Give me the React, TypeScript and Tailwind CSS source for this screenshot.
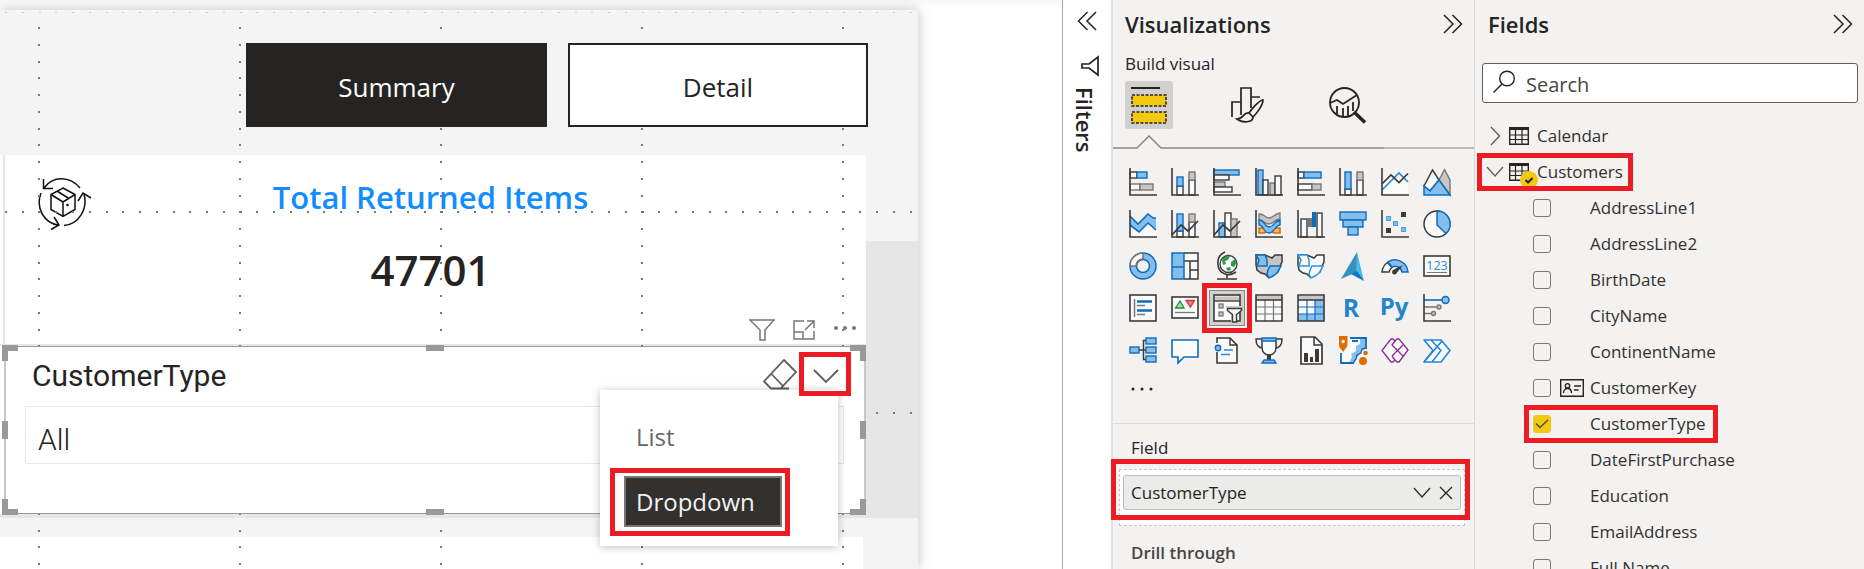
import type { ReactNode } from "react";

const DARK = "#3b3a39";
const BLUE = "#0f6cbd";
const SKY = "#83beec";
const GREY = "#c8c6c4";
const MID = "#797775";
const PALE = "#fafafa";

const Axis = () => <path d="M1 0V27H28" fill="none" stroke={DARK} strokeWidth="1.6" />;

type BoxProps = { x: number; y: number; w: number; h: number; kind: "blue" | "grey" | "white" | "pale" };
const fills = { blue: SKY, grey: GREY, white: PALE, pale: PALE };
const strokes = { blue: BLUE, grey: MID, white: DARK, pale: MID };
const Box = ({ x, y, w, h, kind }: BoxProps) => (
  <rect x={x} y={y} width={w} height={h} fill={fills[kind]} stroke={strokes[kind]} strokeWidth="1.4" />
);

const LAND = "M1 3h9l7 3 3-3h7v7l-2 4-2 6-4 2-2 2-4 1-3-3-4-1-4-3-1-5z";
const WEST = "M1 3h9l2 5v6H2l2-6z";
const EAST = "M15 14h11l-4 7-4 3-4 2-2-4 1-4z";

const visuals: { name: string; art: ReactNode }[] = [
  { name: "Stacked bar chart", art: <><Box x={1} y={4} w={7} h={6} kind="white" /><Box x={8} y={4} w={10} h={6} kind="blue" /><Box x={1} y={16} w={10} h={6} kind="pale" /><Box x={11} y={16} w={13} h={6} kind="grey" /><Axis /></> },
  { name: "Stacked column chart", art: <><Box x={6} y={18} w={6} h={9} kind="white" /><Box x={6} y={9} w={6} h={9} kind="blue" /><Box x={18} y={12} w={6} h={15} kind="white" /><Box x={18} y={4} w={6} h={8} kind="grey" /><Axis /></> },
  { name: "Clustered bar chart", art: <><Box x={1} y={2} w={25} h={5} kind="blue" /><Box x={1} y={7} w={15} h={5} kind="white" /><Box x={1} y={14} w={11} h={5} kind="grey" /><Box x={1} y={19} w={18} h={5} kind="white" /><Axis /></> },
  { name: "Clustered column chart", art: <><Box x={3} y={2} w={5} h={25} kind="blue" /><Box x={8} y={12} w={5} h={15} kind="white" /><Box x={15} y={15} w={5} h={12} kind="grey" /><Box x={20} y={8} w={6} h={19} kind="white" /><Axis /></> },
  { name: "100% stacked bar chart", art: <><Box x={1} y={4} w={6} h={6} kind="white" /><Box x={7} y={4} w={17} h={6} kind="blue" /><Box x={1} y={16} w={14} h={6} kind="white" /><Box x={15} y={16} w={9} h={6} kind="grey" /><Axis /></> },
  { name: "100% stacked column chart", art: <><Box x={6} y={21} w={6} h={6} kind="white" /><Box x={6} y={4} w={6} h={17} kind="blue" /><Box x={18} y={12} w={6} h={15} kind="white" /><Box x={18} y={4} w={6} h={8} kind="grey" /><Axis /></> },
  { name: "Line chart", art: <><path d="M1 16 10 7l8 7 9-9v22H1z" fill={PALE} /><path d="M1 22 18 5l9 9" fill="none" stroke="#2b88d8" strokeWidth="1.7" /><path d="m1 16 9-9 8 7.500 9-9" fill="none" stroke={DARK} strokeWidth="1.7" /><Axis /></> },
  { name: "Area chart", art: <><path d="m16 12 5.500-10.500L27 12v15z" fill={GREY} stroke={MID} strokeWidth="1.4" /><path d="M1 18 9.500 2 16 12 7 23z" fill={PALE} stroke={DARK} strokeWidth="1.5" /><path d="m1 18 6 5 9-11 11 15H1z" fill={SKY} stroke={BLUE} strokeWidth="1.5" /></> },
  { name: "Stacked area chart", art: <><path d="m1 15 9 7 9-9 8 7v7H1z" fill={PALE} /><path d="m1 6 8 8L19 4l5 4h3v12l-8-7-9 9-9-7z" fill={SKY} /><path d="m1 6 8 8L19 4l5 4h3M1 15l9 7 9-9 8 7" fill="none" stroke={BLUE} strokeWidth="1.6" /><Axis /></> },
  { name: "Line and stacked column chart", art: <><Box x={6} y={21} w={6} h={6} kind="white" /><Box x={6} y={4} w={6} h={17} kind="blue" /><Box x={18} y={12} w={6} h={15} kind="white" /><Box x={18} y={4} w={6} h={8} kind="grey" /><path d="m1 25 9-10 7 6 10-10" fill="none" stroke={DARK} strokeWidth="1.7" /><Axis /></> },
  { name: "Line and clustered column chart", art: <><Box x={6} y={13} w={6} h={14} kind="blue" /><Box x={12} y={3} w={6} h={24} kind="white" /><Box x={18} y={9} w={6} h={18} kind="grey" /><path d="m1 25 9-10 7 6 10-10" fill="none" stroke={DARK} strokeWidth="1.7" /><Axis /></> },
  { name: "Ribbon chart", art: <><path d="M4 18h5l5 2 5-2h6v5h-6l-5-2-5 2H4z" fill="#ffb366" stroke="#d96b00" strokeWidth="1.6" /><path d="M4 4c6 0 6 4 10 4s5-4 11-5v6c-6 0-6 5-11 5S9 10 4 10z" fill={GREY} stroke={MID} strokeWidth="1.3" /><path d="M4 10c6 0 5 7 10 7s5-6 11-7v5c-5 0-5 8-11 8S9 15 4 15z" fill={SKY} stroke={BLUE} strokeWidth="1.4" /><Axis /></> },
  { name: "Waterfall chart", art: <><Box x={4} y={9} w={6} h={18} kind="white" /><rect x="11" y="8" width="4" height="9" fill={MID} /><rect x="15" y="2" width="4" height="15" fill={BLUE} /><Box x={20} y={3} w={5} h={24} kind="white" /><Axis /></> },
  { name: "Funnel chart", art: <><Box x={1} y={2} w={26} h={8} kind="blue" /><Box x={4} y={10} w={20} h={7} kind="blue" /><Box x={9} y={17} w={10} h={8} kind="blue" /></> },
  { name: "Scatter chart", art: <><rect x="20" y="2" width="5" height="5" fill={DARK} /><rect x="5" y="18" width="5" height="5" fill={DARK} /><g fill={SKY} stroke="#4a9fe0"><rect x="5.500" y="6.500" width="4" height="4" /><rect x="12.500" y="11.500" width="4" height="4" /><rect x="20.500" y="17.500" width="4" height="4" /></g><Axis /></> },
  { name: "Pie chart", art: <><circle cx="14" cy="14" r="13" fill={PALE} stroke={DARK} strokeWidth="1.5" /><path d="M14 1a13 13 0 0 1 9 22.500L14 15z" fill={SKY} stroke={BLUE} strokeWidth="1.5" /></> },
  { name: "Donut chart", art: <><circle cx="14" cy="14" r="13" fill={SKY} stroke={BLUE} strokeWidth="1.5" /><path d="M1 14A13 13 0 0 1 14 1v6a7 7 0 0 0-7 7z" fill={PALE} stroke={MID} strokeWidth="1.5" /><circle cx="14" cy="14" r="6.500" fill="#f3f2f1" stroke={BLUE} strokeWidth="1.500" /><path d="M7.500 14A6.500 6.500 0 0 1 14 7.500" fill="none" stroke={MID} strokeWidth="1.500" /></> },
  { name: "Treemap", art: <><rect x="13" y="1" width="14" height="26" fill={PALE} /><path d="M13 1h14v26H13M13 9h14M19 9v18M19 18h8" fill="none" stroke={DARK} strokeWidth="1.5" /><path d="M1 1h12v26H1zM1 15h12" fill={SKY} stroke={BLUE} strokeWidth="1.5" /></> },
  { name: "Map", art: <><circle cx="15.500" cy="12" r="8.500" fill={PALE} stroke={DARK} strokeWidth="1.300" /><path d="M9 8c2-4 6-5 8-4l-2 4-3 1 1 3-3 1zM18 10l4-3c2 3 1 6-1 8l-3-1zM13 16l4-1 1 3-3 1z" fill="#2d9a4b" /><path d="M12 0C2 4 3 19 12 22c4 1.500 8 0 11-2M14 22v4M4 27h20" fill="none" stroke={DARK} strokeWidth="1.6" /></> },
  { name: "Filled map", art: <><path d={LAND} fill={GREY} stroke={DARK} strokeWidth="1.500" /><path d={`${WEST}${EAST}`} fill={SKY} stroke={BLUE} strokeWidth="1.500" /></> },
  { name: "Shape map", art: <><path d={LAND} fill={PALE} stroke={DARK} strokeWidth="1.500" /><path d={`${WEST}${EAST}`} fill={PALE} stroke="#2b95e0" strokeWidth="1.500" /></> },
  { name: "Azure map", art: <><path d="M18 0v20L2 27z" fill="#3591c0" /><path d="M18 0l7 29-8-9z" fill="#50b8e0" /><path d="M12 22l6-3 7 10z" fill="#0a78c8" /></> },
  { name: "Gauge", art: <><path d="M1 20a13 13 0 0 1 5.500-9.500l4.500 5A8 8 0 0 0 8 20z" fill={PALE} stroke={DARK} strokeWidth="1.500" /><path d="M7 10a13 13 0 0 1 20 10h-6a7 7 0 0 0-10-5z" fill={SKY} stroke={BLUE} strokeWidth="1.500" /><path d="m22 13-9 4.500a2.500 2.500 0 1 0 3 3z" fill={DARK} /></> },
  { name: "Card", art: <><rect x="1" y="4" width="26" height="20" fill={PALE} stroke={DARK} strokeWidth="1.6" /><text x="14" y="18" textAnchor="middle" fontSize="12.500" fill="#2b88d8">123</text><path d="M4 20.500h20" stroke={MID} /></> },
  { name: "Multi-row card", art: <><rect x="1" y="1" width="26" height="26" fill={PALE} stroke={DARK} strokeWidth="1.6" /><path d="M5.500 5v18" stroke={MID} strokeWidth="1.500" /><path d="M8 7.500h15M8 16.500h15" stroke={BLUE} strokeWidth="2.500" /><path d="M8 11.500h8M8 20.500h8" stroke={MID} strokeWidth="1.400" /></> },
  { name: "KPI", art: <><rect x="1" y="3" width="26" height="21" fill={PALE} stroke={DARK} strokeWidth="1.6" /><path d="M4.500 14 9 7l4 7z" fill="#a8dba8" stroke="#1e8e3e" strokeWidth="1.300" /><path d="M15 6.500h8.500L19.500 13z" fill="#ef8080" stroke="#d13438" strokeWidth="1.300" /><path d="M4 18.500h20" stroke={MID} strokeWidth="1.300" /></> },
  { name: "Slicer", art: <><rect x="1" y="1" width="26" height="26" fill={PALE} stroke={DARK} strokeWidth="1.6" /><path d="M2 4.500h24" stroke={GREY} strokeWidth="4" /><path d="M1 7h26" stroke={DARK} strokeWidth="1.400" /><g fill={GREY} stroke={MID} strokeWidth="1.300"><rect x="6" y="10" width="4" height="4" /><rect x="6" y="18" width="4" height="4" /></g><path d="M12 12h16v5h-4v11H18v-7z" fill="#d2d0ce" /><path d="M14.500 14.500h14v2l-5 4v7.500h-4v-7.500l-5-4z" fill={PALE} stroke={DARK} strokeWidth="1.500" /></> },
  { name: "Table", art: <><rect x="1" y="1" width="26" height="26" fill={PALE} /><path d="M1 4h26" stroke={GREY} strokeWidth="4" /><path d="M10 6v21M18.500 6v21M1 13h26M1 20h26" stroke={MID} strokeWidth="1.200" /><path d="M1 1h26v26H1zM1 6h26" fill="none" stroke={DARK} strokeWidth="1.6" /></> },
  { name: "Matrix", art: <><rect x="1" y="1" width="26" height="26" fill={PALE} /><path d="M1 4h26" stroke={GREY} strokeWidth="4" /><path d="M18 6h9v21H1v-7h17z" fill={SKY} /><path d="M10 6v21M18 6v21M1 13h26M1 20h26" stroke={BLUE} strokeWidth="1.200" /><path d="M1 1h26v26H1zM1 6h26" fill="none" stroke={DARK} strokeWidth="1.6" /></> },
  { name: "R script visual", art: <text x="12" y="23" textAnchor="middle" fontSize="25" fontWeight="700" fill="#2486c8">R</text> },
  { name: "Python visual", art: <text x="13" y="21" textAnchor="middle" fontSize="24" fontWeight="700" fill="#2486c8">Py</text> },
  { name: "Key influencers", art: <><path d="M1 6h18" stroke={BLUE} strokeWidth="1.600" /><circle cx="22.500" cy="6" r="3.500" fill={SKY} stroke={BLUE} strokeWidth="1.500" /><path d="M1 13h13M1 19.500h8" stroke={MID} strokeWidth="1.300" /><circle cx="16" cy="13" r="2" fill={GREY} stroke={MID} strokeWidth="1.300" /><circle cx="10.500" cy="19.500" r="2" fill={GREY} stroke={MID} strokeWidth="1.300" /><Axis /></> },
  { name: "Decomposition tree", art: <><path d="M10 14h7M17 4.500h-2.500v19H17" fill="none" stroke={DARK} strokeWidth="1.500" /><Box x={1} y={11} w={9} h={6} kind="blue" /><Box x={17} y={2} w={10} h={6} kind="blue" /><Box x={17} y={11} w={10} h={6} kind="blue" /><Box x={17} y={20} w={10} h={6} kind="blue" /></> },
  { name: "Q&A", art: <path d="M1 4h26v17H13l-6 6v-6H1z" fill={PALE} stroke={BLUE} strokeWidth="1.6" /> },
  { name: "Smart narrative", art: <><path d="M4 2h13l7 7v18H4z" fill={PALE} stroke={DARK} strokeWidth="1.6" /><path d="M17 2v7h7" fill="none" stroke={DARK} strokeWidth="1.400" /><rect x="1" y="7" width="8" height="9" fill="#f3f2f1" /><circle cx="5" cy="12" r="2.700" fill={SKY} stroke={BLUE} strokeWidth="1.400" /><path d="M11 14h9M8 18.500h9" stroke="#2b88d8" strokeWidth="1.600" /></> },
  { name: "Goals", art: <><path d="M7 3H1c0 6 2 9 7 9M21 3h6c0 6-2 9-7 9" fill="none" stroke={DARK} strokeWidth="1.500" /><path d="M7 4h14v7c0 5-3 8-7 8s-7-3-7-8z" fill={PALE} stroke={DARK} strokeWidth="1.500" /><path d="M7 2h14v3H7z" fill={SKY} stroke={BLUE} strokeWidth="1.400" /><path d="M12 18h4v6h-4z" fill={DARK} /><path d="M9 24h10l2 3H7z" fill={SKY} stroke={BLUE} strokeWidth="1.400" /></> },
  { name: "Paginated report", art: <><path d="M4 1h14l7 7v20H4z" fill={PALE} stroke={DARK} strokeWidth="1.700" /><path d="M17 1v8h8" fill="none" stroke={DARK} strokeWidth="1.500" /><path d="M7 17h4v9H7zM13 21h3v5h-3zM18 13h4v13h-4z" fill={DARK} /></> },
  { name: "ArcGIS map", art: <><path d="M2 2h25v10l-3 2v4l-5 3v5H2z" fill={PALE} /><path d="M21 2h6v11c-4 0-4 3-6 5-3 2-3 7-7 9h-4l3-6-1-3 5-3v-5l4-2z" fill={SKY} /><path d="M11 2h16v11M2 17v10h13M13 5h6" fill="none" stroke={BLUE} strokeWidth="1.800" /><path d="m27 12-4 1-1 4-4 2-1 4-3 4" fill="none" stroke={BLUE} strokeWidth="1.300" /><path d="M0 0h8.500v8c0 4-2.500 4-4 8C2 13 0 12 0 8z" fill="#e06c00" /><circle cx="4.200" cy="5.500" r="1.700" fill={PALE} /><circle cx="24" cy="25" r="4" fill="#e06c00" /><circle cx="26.500" cy="17" r="2.300" fill="#e06c00" /></> },
  { name: "Power Apps", art: <g fill={PALE} stroke="#8e2a9b" strokeWidth="1.300" strokeLinejoin="round"><path d="M10 3h2l2 2 2-2h2l9 11-9 12h-2l-2-2-2 2h-2L1 14.500z" /><path d="m14 5-3 4 11 11M11 20 22 9M14 24l-3-4" fill="none" /></g> },
  { name: "Power Automate", art: <g fill={PALE} stroke="#1f86e0" strokeWidth="1.600" strokeLinejoin="round"><path d="M1 4h17l9 10.500L18 26H1l9-11.500z" /><path d="M8 4l10 10.500L9 26M1 26 19 5" fill="none" /></g> },
];

const Mark = ({ className }: { className: string }) => (
  <span aria-hidden="true" className={`pointer-events-none absolute z-20 border-[5px] border-[#ed1c24] ${className}`} />
);

const DoubleChevron = ({ left }: { left?: boolean }) => (
  <svg width="20" height="20" viewBox="0 0 20 20" fill="none" stroke="#252423" strokeWidth="1.500" className={left ? "rotate-180" : ""}>
    <path d="m1 1 9 9-9 9M9.500 1l9 9-9 9" />
  </svg>
);

const TableIcon = () => (
  <svg width="20" height="18" viewBox="0 0 20 18" fill="none" stroke="#252423">
    <path d="M.7.700h18.600v16.600H.7z" strokeWidth="1.400" />
    <path d="M0 2h20" strokeWidth="2" />
    <path d="M.7 8h18.600M.7 12.500h18.600M6.500 3v14M13 3v14" strokeWidth="1.200" />
  </svg>
);

const fields = ["AddressLine1", "AddressLine2", "BirthDate", "CityName", "ContinentName", "CustomerKey", "CustomerType", "DateFirstPurchase", "Education", "EmailAddress", "Full Name"];

const columns = [38, 239, 440, 641, 842];
const step = 16.75;

function DotGrid() {
  const across = Array.from({ length: 55 }, (_, i) => 5 + Math.round(i * step));
  const down = Array.from({ length: 33 }, (_, i) => 17 + Math.round(i * step));
  return (
    <svg aria-hidden="true" className="pointer-events-none absolute inset-0 h-full w-full" fill="#777">
      {across.map((x) => (
        <g key={x}>
          <rect x={x} y="2" width="2" height="1" fill="#c8c8c8" />
          <rect x={x} y="201" width="2" height="2" />
          <rect x={x} y="402" width="2" height="2" />
        </g>
      ))}
      {columns.map((x) => down.map((y) => <rect key={`${x}-${y}`} x={x} y={y} width="2" height="2" />))}
    </svg>
  );
}

function Handles() {
  return (
    <div aria-hidden="true" className="pointer-events-none">
      <span className="absolute -left-1 -top-0.5 size-4 border-l-[6px] border-t-[6px] border-[#999]" />
      <span className="absolute -right-0.5 -top-0.5 size-4 border-r-[6px] border-t-[6px] border-[#999]" />
      <span className="absolute -bottom-0.5 -left-1 size-4 border-b-[6px] border-l-[6px] border-[#999]" />
      <span className="absolute -bottom-0.5 -right-0.5 size-4 border-b-[6px] border-r-[6px] border-[#999]" />
      <span className="absolute -top-0.5 left-1/2 h-1.5 w-[18px] -translate-x-1/2 bg-[#999]" />
      <span className="absolute -bottom-0.5 left-1/2 h-1.5 w-[18px] -translate-x-1/2 bg-[#999]" />
      <span className="absolute -left-1 top-1/2 h-[18px] w-1.5 -translate-y-1/2 bg-[#999]" />
      <span className="absolute -right-0.5 top-1/2 h-[18px] w-1.5 -translate-y-1/2 bg-[#999]" />
    </div>
  );
}

function Slicer() {
  return (
    <div className="relative z-10 ml-1 h-[168px] border-x-2 border-y border-x-[#c8c8c8] border-y-[#999] bg-white pl-[19px] pr-5 pt-2">
      <Handles />
      <div className="flex h-[51px] items-start justify-between">
        <label htmlFor="customer-type" className="pl-[7px] font-['Roboto',sans-serif] text-[30px] font-normal leading-[42px] text-[#252423]">CustomerType</label>
        <div className="-mr-1 flex">
          <button aria-label="Clear selections" className="mt-1 h-9 w-10">
            <svg width="36" height="36" viewBox="0 0 36 36" fill="none" stroke="#605e5c" strokeWidth="1.800">
              <path d="M22 1 34 13 18.500 29.500H9L2 22.500zM9 14.500l12 12.500M9 29.500h18" />
            </svg>
          </button>
          <div className="relative">
            <button aria-label="Slicer type" aria-expanded="true" className="flex h-[44px] w-[46px] items-center justify-center">
              <svg width="26" height="16" viewBox="0 0 26 16" fill="none" stroke="#605e5c" strokeWidth="1.800" className="ml-0.5">
                <path d="m1 1 12 12L25 1" />
              </svg>
            </button>
            <Mark className="-left-[3px] -top-[3px] h-[44px] w-[52px]" />
            <div role="menu" className="absolute right-[10px] top-[35px] z-10 flex h-[156px] w-[238px] flex-col bg-white px-6 pt-[22px] text-[24px] shadow-[0_1px_8px_rgba(0,0,0,0.25)]">
              <button role="menuitem" className="h-[50px] px-3 text-left text-[#666]">List</button>
              <div className="relative mt-[14px] w-[158px]">
                <button role="menuitem" className="h-[51px] w-full border-2 border-[#797775] bg-[#323130] px-2.5 text-left text-[#f3f2f1]">Dropdown</button>
                <Mark className="-left-3.5 -right-2 -top-2 h-[68px]" />
              </div>
            </div>
          </div>
        </div>
      </div>
      <select id="customer-type" className="block h-[58px] w-full appearance-none border border-[#e6e6e6] bg-white pl-3 pt-2 font-['Roboto',sans-serif] text-[30px] font-light text-[#252423]">
        <option>All</option>
      </select>
    </div>
  );
}

function ReturnedIcon() {
  return (
    <svg width="54" height="54" viewBox="0 0 54 54" fill="none" stroke="#111" strokeWidth="1.500">
      <path d="M6 11C15-1.500 32-1 42 11M5.500 2v9.500H15M3 16C-3 32 7 46 20 48M16 40l5 8-8 4.500M26 48.500C41 47 50 32 46 17M40 24l5-8 8 5" />
      <path d="m25 11 12 6.500v15L25 39.500l-12-7v-15zM13 17.500l12 7.500 12-7.500M25 25v14.500M19 14l12 7.500" />
      <path d="m28.500 28.500 2-1" strokeWidth="2.500" />
    </svg>
  );
}

function Report() {
  return (
    <main className="min-w-0 flex-1 overflow-hidden bg-gradient-to-b from-[#f8f8f8] to-white to-[8px] pt-2.5">
      <div className="relative mr-36 flex h-full flex-col bg-[#f4f4f4] shadow-[0_0_12px_rgba(0,0,0,0.25)]">
        <nav className="relative z-10 flex justify-end gap-[21px] pb-7 pr-[50px] pt-[33px] text-[26px]">
          <button className="h-[84px] w-[301px] bg-[#252423] pt-1 text-white">Summary</button>
          <button className="h-[84px] w-[300px] border-2 border-[#252423] bg-white pt-1 text-[#252423]">Detail</button>
        </nav>
        <div className="flex">
          <div className="min-w-0 flex-1 bg-[#e6e6e6] pb-1">
            <section className="mb-0.5 flex h-[189px] flex-col bg-white">
              <div className="ml-[3px] flex h-full flex-col border-l-2 border-[#e6e6e6]">
                <div className="flex flex-1">
                  <div className="w-0 pl-[33px] pt-[22px]"><ReturnedIcon /></div>
                  <div className="relative z-10 flex-1 pr-[43px] pt-[15px] text-center">
                    <h2 className="text-[31px] font-semibold leading-[54px] text-[#118dff]">Total Returned Items</h2>
                    <p className="pt-4 text-[42px] font-semibold leading-[60px] text-[#252423]">47701</p>
                  </div>
                </div>
                <div className="relative z-10 flex h-7 items-center justify-end gap-[18px] pr-[9px]">
                  <svg width="26" height="24" viewBox="0 0 26 24" fill="none" stroke="#797775" strokeWidth="1.500"><path d="M1 2h24L16 12v10h-5V12z" /></svg>
                  <svg width="22" height="20" viewBox="0 0 22 20" fill="none" stroke="#797775" strokeWidth="1.500"><path d="M11 1H1v18h20v-8M1 12h9v7M14 1h7v7M21 1l-9 9" /></svg>
                  <svg width="24" height="24" viewBox="0 0 24 24" fill="#797775"><circle cx="3" cy="10" r="2" /><circle cx="12" cy="10" r="2" /><circle cx="21" cy="10" r="2" /></svg>
                </div>
              </div>
            </section>
            <div className="bg-white"><Slicer /></div>
          </div>
          <div className="w-[52px] bg-[#e6e6e6]"><div className="h-[86px] bg-[#f4f4f4]" /></div>
        </div>
        <div className="mr-[55px] mt-[19px] flex-1 bg-white" />
        <DotGrid />
      </div>
    </main>
  );
}

function FiltersPane() {
  return (
    <aside className="flex w-[49px] shrink-0 flex-col items-center border-l border-[#a6a6a6] bg-white pt-[11px]">
      <button aria-label="Expand filters"><DoubleChevron left /></button>
      <svg width="20" height="22" viewBox="0 0 20 22" fill="none" stroke="#252423" strokeWidth="1.700" className="ml-1.5 mt-6">
        <path d="M18 2v18L9 13H2V9h7z" />
      </svg>
      <h2 className="mr-1 mt-2.5 text-[22px] font-semibold leading-6 text-[#252423] [writing-mode:vertical-rl]">Filters</h2>
    </aside>
  );
}

function Visualizations() {
  return (
    <aside className="w-[363px] shrink-0 border-l-2 border-[#e1dfdd] bg-[#f3f2f1] text-[#252423]">
      <header className="flex items-center justify-between pl-3 pr-[11px] pt-2">
        <h2 className="text-[22px] font-semibold leading-8">Visualizations</h2>
        <button aria-label="Collapse visualizations"><DoubleChevron /></button>
      </header>
      <h3 className="pl-3 pt-3 text-[17px] font-medium leading-6">Build visual</h3>
      <div className="flex gap-[51px] pl-3 pt-[5px]">
        <button aria-label="Build visual" className="flex size-12 items-center justify-center rounded-[3px] bg-[#d2d0ce]">
          <svg width="36" height="38" viewBox="0 0 36 38" fill="none" stroke="#252423">
            <path d="M0 2h29" strokeWidth="2" />
            <g fill="#f2c811" strokeWidth="1.600" strokeDasharray="3 1.500"><rect x="1" y="9" width="34" height="11" /><rect x="1" y="26" width="34" height="11" /></g>
          </svg>
        </button>
        <button aria-label="Format visual" className="flex size-12 items-center justify-center">
          <svg width="36" height="38" viewBox="0 0 36 38" fill="none" stroke="#252423" strokeWidth="1.700">
            <path d="M2 31V16h9M11 29V2h10v20M21 11h9" />
            <path d="M33 14c-4 0-12 10-14 13l4 4c4-4 10-12 10-17zM19 27c-6-1-5 6-12 6 5 4 16 4 16-2" fill="#f3f2f1" />
          </svg>
        </button>
        <button aria-label="Analytics" className="flex size-12 items-center justify-center">
          <svg width="38" height="38" viewBox="0 0 38 38" fill="none" stroke="#252423" strokeWidth="1.800">
            <circle cx="16.500" cy="16.500" r="14.500" />
            <path d="m2 17 7-3 6 4 14-9M9 20v8M15 22v9M20 20v10M25 16v9" />
            <path d="m26 26 11 10.500" strokeWidth="3.500" />
          </svg>
        </button>
      </div>
      <svg width="100%" height="16" className="mt-1.5 block" fill="none">
        <path d="M271 13H361" stroke="#bdbbb9" strokeWidth="2" />
        <path d="M0 13h24L36 1l12 12h223" stroke="#8a8886" strokeWidth="1.500" />
      </svg>
      <div className="grid grid-cols-[repeat(8,42px)] pl-[9px] pt-[10px]">
        {visuals.map((v) => (
          <div key={v.name} className="relative flex size-[42px] items-center justify-center">
            <button
              aria-label={v.name}
              className={v.name === "Slicer" ? "flex size-9 items-center justify-center border border-[#8a8886] bg-[#d2d0ce]" : "flex size-9 items-center justify-center"}
            >
              <svg width="28" height="28" viewBox="0 0 28 28" overflow="visible">{v.art}</svg>
            </button>
            {v.name === "Slicer" && <Mark className="-inset-1" />}
          </div>
        ))}
      </div>
      <button aria-label="More visuals" className="ml-[17px] mt-2.5 block">
        <svg width="24" height="24" viewBox="0 0 24 24" fill="#252423"><circle cx="3" cy="8" r="1.500" /><circle cx="12" cy="8" r="1.500" /><circle cx="21" cy="8" r="1.500" /></svg>
      </button>
      <section className="mt-[18px] border-t border-[#dcdad8] pt-3">
        <h3 className="pl-[18px] text-[17px] leading-6">Field</h3>
        <div className="relative ml-1.5 mr-[9px] mt-[9px] h-[57px] border border-dashed border-[#c8c6c4] bg-white p-[3px] pt-[5px]">
          <div className="flex h-[35px] items-center rounded-[3px] border border-[#bebbb8] bg-[#ebebea] px-[7px] text-[17px]">
            <span className="flex-1">CustomerType</span>
            <button aria-label="Field options" className="mr-2">
              <svg width="18" height="12" viewBox="0 0 18 12" fill="none" stroke="#252423" strokeWidth="1.200"><path d="m1 1 8 9 8-9" /></svg>
            </button>
            <button aria-label="Remove field">
              <svg width="14" height="14" viewBox="0 0 14 14" fill="none" stroke="#252423" strokeWidth="1.300"><path d="m1 1 12 12M13 1 1 13" /></svg>
            </button>
          </div>
          <Mark className="-left-[9px] -right-[6px] -top-[11px] h-[61px]" />
        </div>
        <h3 className="pl-[18px] pt-[15px] text-[17px] font-semibold leading-6 text-[#484644]">Drill through</h3>
      </section>
    </aside>
  );
}

function Fields() {
  return (
    <aside className="w-[390px] shrink-0 border-l border-[#dcdad8] bg-[#f3f2f1] text-[#252423]">
      <header className="flex items-center justify-between pl-[13px] pr-[11px] pt-2">
        <h2 className="text-[22px] font-semibold leading-8">Fields</h2>
        <button aria-label="Collapse fields"><DoubleChevron /></button>
      </header>
      <div className="ml-[7px] mr-1.5 mt-[23px] flex h-10 items-center gap-2.5 rounded-[3px] border border-[#605e5c] bg-white pl-2.5">
        <svg width="23" height="23" viewBox="0 0 23 23" fill="none" stroke="#252423" strokeWidth="1.400" className="mb-1"><circle cx="14" cy="8.500" r="7.300" /><path d="m9 14-8.500 8.500" /></svg>
        <input aria-label="Search" placeholder="Search" className="min-w-0 flex-1 bg-transparent pt-[3px] text-[20px] outline-none placeholder:text-[#484644]" />
      </div>
      <div className="pt-[15px] text-[17px] text-[#323130]">
        <button className="flex h-9 items-center pl-[15px]">
          <svg width="11" height="20" viewBox="0 0 11 20" fill="none" stroke="#605e5c" strokeWidth="1.300" className="mr-2"><path d="m1 1 8.500 9L1 19" /></svg>
          <TableIcon />
          <span className="pl-2">Calendar</span>
        </button>
        <button className="relative flex h-9 items-center pl-[11px]">
          <svg width="18" height="12" viewBox="0 0 18 12" fill="none" stroke="#605e5c" strokeWidth="1.300" className="mr-[5px]"><path d="m1 1 8 9 8-9" /></svg>
          <span className="relative">
            <TableIcon />
            <svg width="18" height="18" viewBox="0 0 18 18" className="absolute -bottom-2 -right-[9px]"><circle cx="9" cy="9" r="9" fill="#f2c811" /><path d="m5.500 9 2.500 2.500L12.500 7" fill="none" stroke="#252423" strokeWidth="2" /></svg>
          </span>
          <span className="pl-2">Customers</span>
          <Mark className="-right-2.5 -top-px bottom-[-1px] left-0.5" />
        </button>
        <ul>
          {fields.map((name) => (
            <li key={name} className="relative h-9 w-fit">
              <label className="flex h-9 items-center pl-[58px]">
                <input
                  type="checkbox"
                  defaultChecked={name === "CustomerType"}
                  className="peer size-[18px] appearance-none rounded-[3px] border border-[#797775] bg-[#f3f2f1] checked:border-[#f2c811] checked:bg-[#f2c811]"
                />
                <svg width="14" height="10" viewBox="0 0 14 10" fill="none" stroke="#484644" strokeWidth="1.300" className="invisible -ml-4 mr-0.5 peer-checked:visible"><path d="m1 4.500 4 4L13 1" /></svg>
                <span className="ml-[9px] flex w-[30px]">
                  {name === "CustomerKey" && (
                    <svg width="24" height="18" viewBox="0 0 24 18" fill="none" stroke="#252423" strokeWidth="1.400"><path d="M.7.700h22.600v16.600H.7z" /><circle cx="7.500" cy="6.800" r="2.200" /><path d="M3.500 14c0-6 8-6 8 0M14 7h7M14 11h4.500" /></svg>
                  )}
                </span>
                <span className="whitespace-nowrap">{name}</span>
              </label>
              {name === "CustomerType" && <Mark className="-right-3 -top-px bottom-[-1px] left-[49px]" />}
            </li>
          ))}
        </ul>
      </div>
    </aside>
  );
}

export default function App() {
  return (
    <div className="flex h-screen overflow-hidden bg-white font-['Open_Sans','Noto_Sans',sans-serif]">
      <Report />
      <FiltersPane />
      <Visualizations />
      <Fields />
    </div>
  );
}
